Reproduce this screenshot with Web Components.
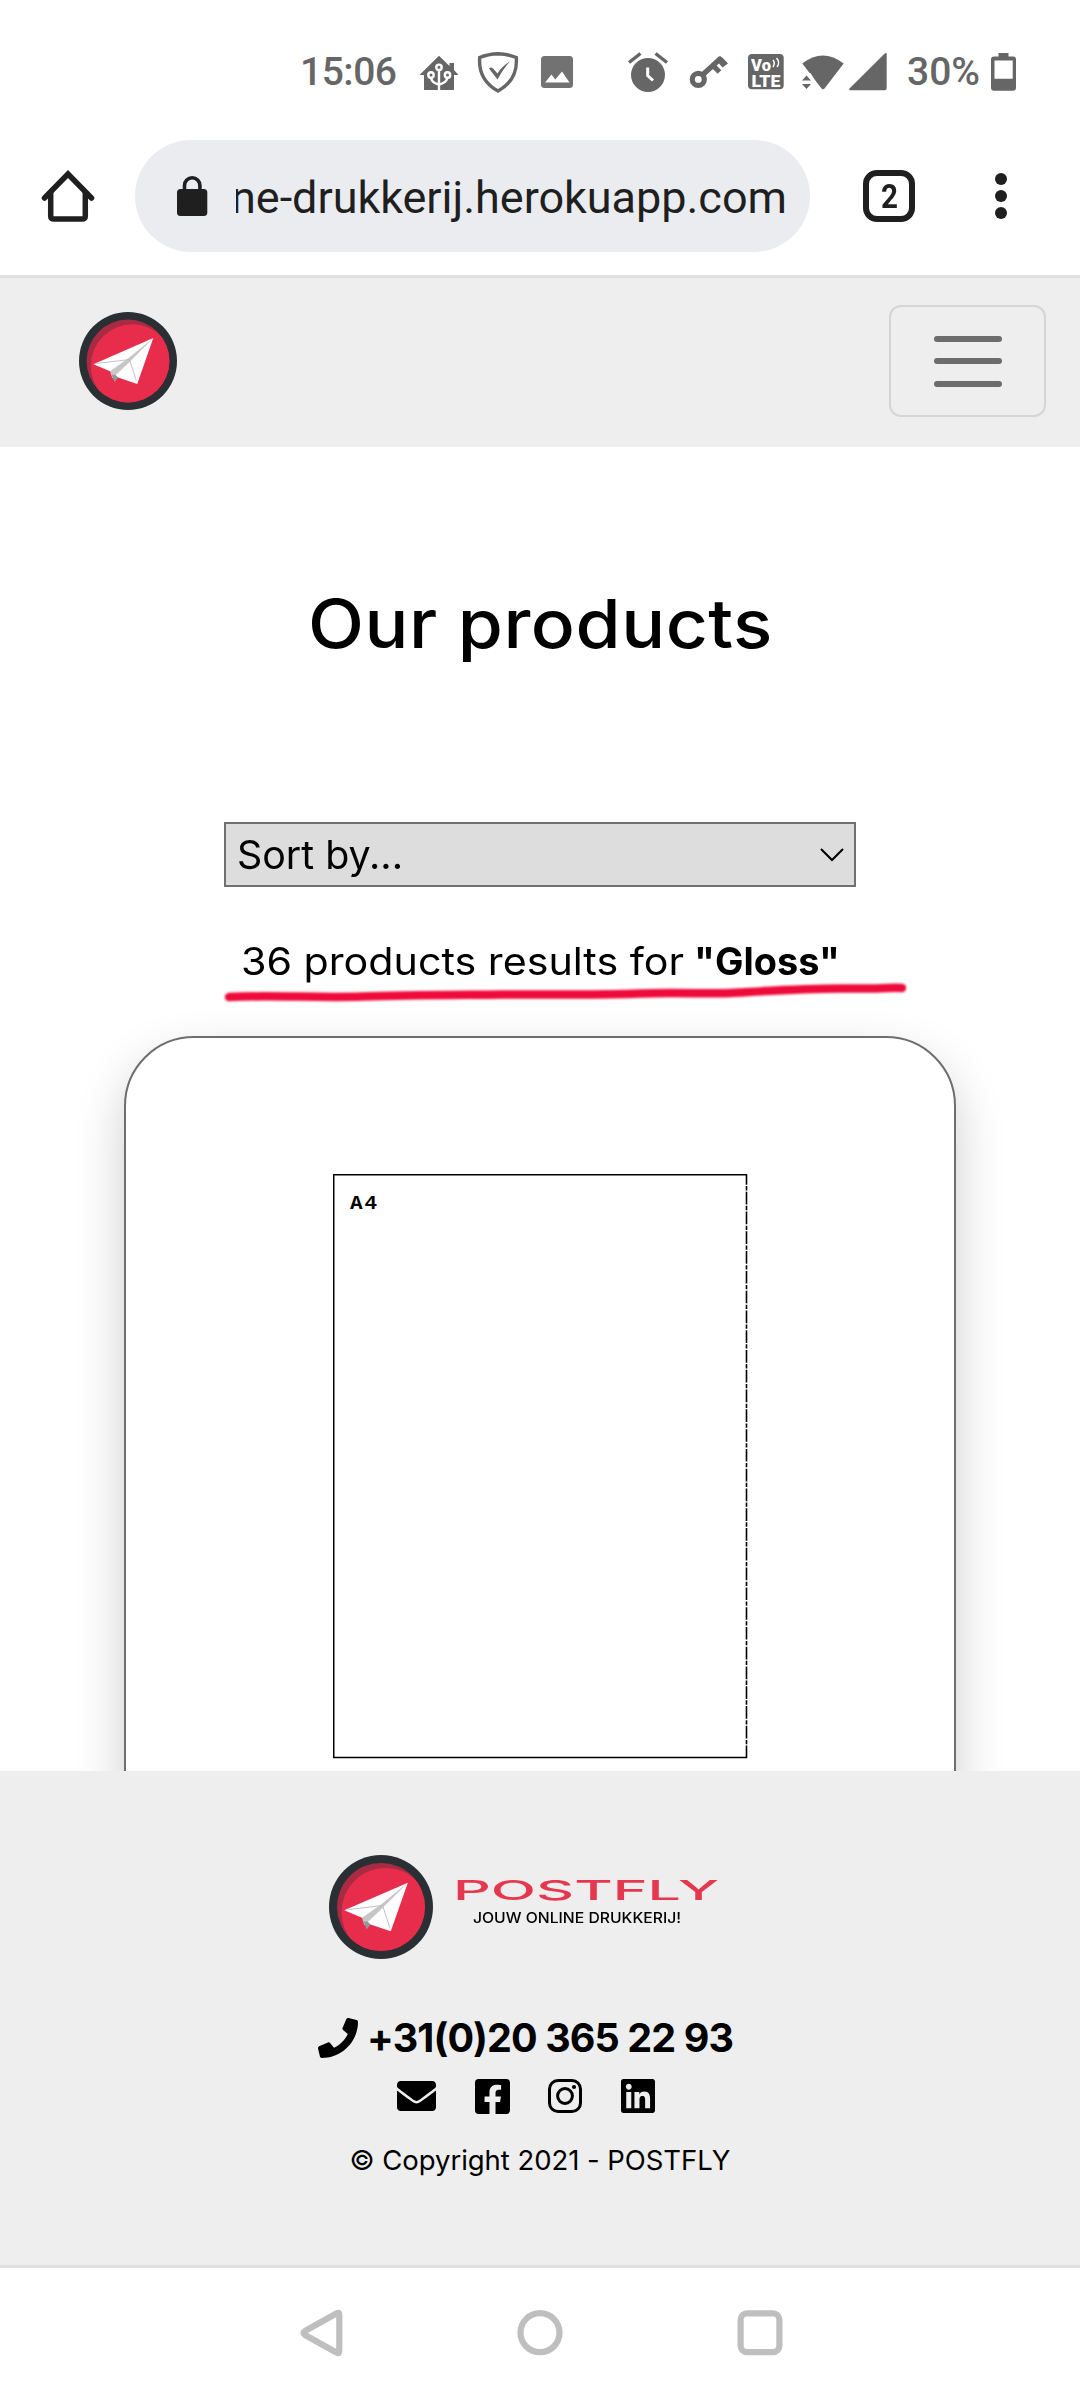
<!DOCTYPE html>
<html lang="en">
<head>
<meta charset="utf-8">
<meta name="viewport" content="width=device-width">
<title>Our products - POSTFLY</title>
<style>
  html, body { margin: 0; background: #fff; }
  body { font-family: Inter, "Open Sans", sans-serif; color: #000; }
</style>
</head>
<body>
<phone-screen>
  <status-bar slot="top"></status-bar>
  <browser-toolbar slot="top"></browser-toolbar>
  <site-header></site-header>
  <product-page heading="Our products">
    <sort-select>Sort by...</sort-select>
    <result-count count="36" term="Gloss"></result-count>
    <product-card><paper-preview label="A4"></paper-preview></product-card>
  </product-page>
  <site-footer></site-footer>
  <nav-buttons slot="bottom"></nav-buttons>
</phone-screen>

<script>
const define = (name, html, setup) => {
  const t = document.createElement('template');
  t.innerHTML = html;
  customElements.define(name, class extends HTMLElement {
    constructor() {
      super();
      this.attachShadow({ mode: 'open' }).append(t.content.cloneNode(true));
    }
    connectedCallback() { if (setup) setup(this, this.shadowRoot); }
  });
};

/* One line of text set to an exact width: by tracking, or by stretching when "stretch" is present. */
define('fit-text', `
<style>
  :host { display: block; white-space: nowrap; flex: none; }
  span { display: inline-block; transform-origin: 0 50%; }
</style><span><slot></slot></span>`, (el, root) => {
  const w = +el.getAttribute('w');
  const span = root.querySelector('span');
  const n = el.textContent.length;
  el.style.width = w + 'px';
  const natural = span.getBoundingClientRect().width;
  if (el.hasAttribute('stretch')) span.style.transform = `scaleX(${w / natural})`;
  else {
    span.style.letterSpacing = (w - natural) / (n - 1) + 'px';
  }
});

define('phone-screen', `
<style>
  :host { display: flex; flex-direction: column; width: 1080px; height: 2400px; overflow: hidden; background: #fff; }
</style>
<slot name="top"></slot><slot></slot><slot name="bottom"></slot>`);

define('status-bar', `
<style>
  :host { display: flex; height: 68px; padding: 50px 0 0 300px; color: #666; font: 500 39px/44px Roboto, sans-serif; }
  svg { flex: none; height: 44px; fill: #666; }
  fit-text { height: 44px; line-height: 44px; }
</style>
<fit-text w="97">15:06</fit-text>
<svg style="margin-left:21px" width="42" viewBox="418 50 42 44">
  <path d="M439 55.700L449.500 66V63h4.500V70L458.500 75H454V90H424V75H419.500Z"/>
  <g fill="none" stroke="#fff" stroke-width="2.400"><path d="M439 71V90M431 78Q432 83 439 84.500Q446 83 447.500 78"/><circle cx="439" cy="67.300" r="2.700"/><circle cx="431" cy="75" r="2.700"/><circle cx="447.500" cy="75" r="2.700"/></g>
</svg>
<svg style="margin-left:16px" width="44" viewBox="476 50 44 44">
  <path d="M498 53.700Q508 54 516.300 57.500Q518 80 498 91Q478 80 479.700 57.500Q488 54 498 53.700Z" fill="none" stroke="#666" stroke-width="3.400"/>
  <path d="M489 68.500Q491 66.500 493 68.500L497.500 73.500Q502 66 510 61.500Q503 69 497.500 79.500Z"/>
</svg>
<svg style="margin-left:19px" width="36" viewBox="539 50 36 44">
  <rect x="541" y="56" width="32" height="32" rx="3.500" fill="#727272"/>
  <path d="M545 82.500L551.500 74.500L555.300 79.500L562 71.500L569.500 82.500Z" fill="#fff"/>
</svg>
<svg style="margin-left:51px" width="44" viewBox="626 50 44 44">
  <circle cx="648" cy="75" r="17"/>
  <path d="M629 62.500L640.500 53.500M667 62.500L655.500 53.500" stroke="#666" stroke-width="3.400"/>
  <path d="M647.700 67.500V75.500L653 80.500" fill="none" stroke="#fff" stroke-width="3"/>
</svg>
<svg style="margin-left:18px" width="42" viewBox="688 50 42 44">
  <circle cx="698.300" cy="79.400" r="6" fill="none" stroke="#666" stroke-width="5.200"/>
  <path d="M703 74.500L721 58M713.500 66L719.500 72M720 59L725 64" fill="none" stroke="#666" stroke-width="5.200"/>
  <path d="M720 55.700L728 63.500L722.500 67.500L718.500 63Z"/>
</svg>
<svg style="margin-left:16px" width="40" viewBox="746 50 40 44">
  <rect x="748" y="54" width="35.700" height="35.300" rx="4"/>
  <g fill="#fff" font-family="Roboto, sans-serif" font-weight="900"><text x="751" y="70.500" font-size="16.500" textLength="20">Vo</text><text x="751.500" y="86.500" font-size="17" textLength="29" lengthAdjust="spacingAndGlyphs">LTE</text></g>
  <path d="M773 60Q775.500 63 773 67M776.500 58Q780.500 62.500 777 67" fill="none" stroke="#fff" stroke-width="1.500"/>
</svg>
<svg style="margin-left:14px" width="46" viewBox="800 50 46 44">
  <path d="M802.300 63.500Q822.800 47.500 843.700 63.500L824.500 88.500Q823 90 821.500 88.500Z"/>
  <path d="M801 74L810.500 73L814 79V90H801Z" fill="#fff"/>
  <path d="M802 80.500L806.500 75.500L811 80.500ZM802 84L806.500 89L811 84Z"/>
</svg>
<svg style="margin-left:1px" width="42" viewBox="847 50 42 44"><path d="M849.500 88.500L885 53.300Q886.700 52.500 886.700 54V88Q886.700 90.300 884.500 90.300H850.500Q848.500 90.200 849.500 88.500Z"/></svg>
<fit-text style="margin-left:18px" w="73">30%</fit-text>
<svg style="margin-left:9px" width="29" viewBox="989 50 29 44">
  <path fill-rule="evenodd" d="M998.500 53H1008.500V56.500H1013Q1016 56.500 1016 59.500V87.500Q1016 90.700 1013 90.700H994Q991 90.700 991 87.500V59.500Q991 56.500 994 56.500H998.500ZM994.500 60.500V78.700H1012.700V60.500Z"/>
</svg>`);

define('browser-toolbar', `
<style>
  :host { display: flex; align-items: center; box-sizing: border-box; height: 160px; padding: 0 0 1px 40px; border-bottom: 3px solid #e0e0e0; color: #1f1f1f; }
  svg { flex: none; display: block; }
  .pill { display: flex; align-items: center; box-sizing: border-box; width: 675px; height: 112px; margin-left: 39px; padding: 0 23px 0 40px; border-radius: 56px; background: #ebecf0; }
  .clip { display: flex; justify-content: flex-end; width: 551px; margin-left: 27px; padding-top: 4px; overflow: hidden; }
  fit-text { font: 400 45px/60px Roboto, sans-serif; }
  .tabs { display: flex; align-items: center; justify-content: center; box-sizing: border-box; width: 52px; height: 52px; margin-left: 53px; border: 6px solid #1f1f1f; border-radius: 14px; }
  .tabs fit-text { font-weight: 700; font-size: 34px; line-height: 40px; }
</style>
<svg width="56" height="56" viewBox="40 168 56 56"><g fill="none" stroke="#1f1f1f" stroke-width="5.500"><path d="M44.500 198L68 174L91.500 198" stroke-linecap="round"/><path d="M50.700 191V216Q50.700 219 54 219H82Q85.300 219 85.300 216V191"/></g></svg>
<div class="pill">
  <svg width="34" height="44" viewBox="175 173 34 44" fill="#1f1f1f"><rect x="177" y="188" width="30.300" height="27" rx="3.500"/><path d="M184.500 190V184.500A7.700 7.700 0 0 1 199.900 184.500V190" fill="none" stroke="#1f1f1f" stroke-width="3.600"/></svg>
  <div class="clip"><fit-text w="556">ne-drukkerij.herokuapp.com</fit-text></div>
</div>
<div class="tabs"><fit-text w="17" stretch>2</fit-text></div>
<svg style="margin-left:78px" width="16" height="52" viewBox="993 170 16 52" fill="#1f1f1f"><circle cx="1001" cy="179" r="6"/><circle cx="1001" cy="196" r="6"/><circle cx="1001" cy="213" r="6"/></svg>`);

define('postfly-badge', `
<style>:host { display: block; flex: none; } svg { display: block; width: 100%; height: 100%; }</style>
<svg viewBox="0 0 100 100">
  <clipPath id="c"><circle cx="50" cy="50" r="42.300"/></clipPath>
  <circle cx="50" cy="50" r="50" fill="#2a2f33"/>
  <g clip-path="url(#c)"><rect width="100" height="100" fill="#a82b43"/><circle cx="54.500" cy="55" r="42.500" fill="#e72d4b"/></g>
  <path d="M75.800 26.600L14.700 53.200L31.700 60.400L39.200 66.500L59.400 73.400Z" fill="#fff"/>
  <path d="M75.800 26.600L50 47.500L31.700 60.400L34 67.500L50.500 52Z" fill="#c6c6c6"/>
  <path d="M33.500 64L36.200 71.700L40 66.800L37 64Z" fill="#929698"/>
  <path d="M18 52.500L51.500 48.500L58.500 70" fill="none" stroke="#bbb" stroke-width=".9"/>
</svg>`);

define('site-header', `
<style>
  :host { display: flex; align-items: center; justify-content: space-between; box-sizing: border-box; height: 169px; padding: 0 34px 3px 79px; background: #eee; }
  postfly-badge { width: 98px; height: 98px; }
  button { display: flex; flex-direction: column; align-items: center; justify-content: center; gap: 16.500px; box-sizing: border-box; width: 157px; height: 112px; padding: 0; border: 2px solid #d5d5d5; border-radius: 12px; background: none; }
  i { width: 68px; height: 6px; border-radius: 3px; background: #6c6c6c; }
</style>
<postfly-badge></postfly-badge>
<button aria-label="Menu"><i></i><i></i><i></i></button>`);

define('product-page', `
<style>
  :host { display: flex; flex-direction: column; align-items: center; height: 1324px; flex: none; overflow: hidden; }
  h1 { margin: 134px 0 156px; font: 500 67.500px/85px Inter, sans-serif; letter-spacing: .5px; }
</style>
<h1></h1><slot></slot>`, (el, root) => {
  root.querySelector('h1').innerHTML = `<fit-text w="465" stretch>${el.getAttribute('heading')}</fit-text>`;
});

define('sort-select', `
<style>
  :host { display: flex; align-items: center; justify-content: space-between; box-sizing: border-box; width: 632px; height: 65px; padding: 0 9px 0 11px; border: 2px solid #707070; background: #ddd; font-size: 39px; line-height: 61px; }
</style>
<fit-text w="168"></fit-text>
<svg width="26" height="16" viewBox="0 0 26 16"><path d="M2 2L13 13L24 2" fill="none" stroke="#000" stroke-width="2"/></svg>`, (el, root) => {
  const t = document.createElement('fit-text');
  t.setAttribute('w', '166');
  t.setAttribute('stretch', '');
  t.textContent = el.textContent.trim();
  root.querySelector('fit-text').replaceWith(t);
});

define('result-count', `
<style>
  :host { position: relative; display: flex; justify-content: space-between; box-sizing: border-box; width: 600px; height: 60px; margin: 44px 0 45px; font-size: 38.500px; line-height: 60px; }
  b { font-weight: 700; }
  svg { position: absolute; left: -20px; top: 45px; }
</style>
<svg width="700" height="30" viewBox="220 976 700 30"><path d="M229 997C270 995 320 998 363 996.500S450 995 503 994.500S590 995.500 640 993.500S700 995 740 992.500S810 988 850 988.500S890 987 902 988" fill="none" stroke="#ee0a3a" stroke-width="8.500" stroke-linecap="round" style="filter:blur(1px)"/></svg>`, (el, root) => {
  root.querySelector('svg').insertAdjacentHTML('beforebegin',
    `<fit-text style="margin-left:1px" w="443" stretch>${el.getAttribute('count')} products results for</fit-text><b><fit-text w="146" stretch>"${el.getAttribute('term')}"</fit-text></b>`);
});

define('product-card', `
<style>
  :host { display: flex; justify-content: center; flex: none; box-sizing: border-box; width: 832px; height: 1100px; padding-top: 136px; border: 2px solid #6e6e6e; border-radius: 70px; background: #fff; box-shadow: 0 22px 50px rgba(0,0,0,.2); }
</style><slot></slot>`);

define('paper-preview', `
<style>
  :host { display: block; width: 415px; height: 585px; }
  svg { display: block; }
</style>
<svg width="415" height="585" viewBox="0 0 415 585">
  <g fill="none" stroke="#000"><path d="M414 .75H.75V583.500H414" stroke-width="1.500"/><path d="M413.500 0V584" stroke-width="1.600" stroke-dasharray="12.680 1.400 4.300 1.400" stroke-dashoffset="2"/></g>
  <text x="17" y="35" font-family="Liberation Mono, monospace" font-weight="700" font-size="21" textLength="27"></text>
</svg>`, (el, root) => {
  root.querySelector('text').textContent = el.getAttribute('label');
});

define('site-footer', `
<style>
  :host { display: flex; flex-direction: column; align-items: center; box-sizing: border-box; height: 494px; flex: none; padding-top: 84px; background: #eee; }
  .brand { display: flex; width: 390px; margin-right: 33px; }
  postfly-badge { width: 104px; height: 104px; }
  .words { display: flex; flex-direction: column; margin: 22px 0 0 20px; }
  .name { color: #e5384f; font: 500 27.500px/26px Inter, sans-serif; }
  .tag { margin: 4px 0 0 20px; font: 500 14.500px/22px Inter, sans-serif; }
  .phone { display: flex; align-items: center; gap: 9px; height: 50px; width: 418px; margin: 54px 0 0 -26px; font-size: 39.500px; line-height: 50px; font-weight: 700; }
  .social { display: flex; align-items: center; width: 258px; height: 36px; margin: 15px 0 0 -28px; }
  .social svg + svg { margin-left: 38.500px; }
  svg { display: block; flex: none; }
  .copy { margin-top: 25px; font-size: 27.500px; line-height: 42px; }
</style>
<div class="brand"><postfly-badge></postfly-badge>
  <div class="words"><fit-text class="name" w="266" stretch>POSTFLY</fit-text><fit-text class="tag" w="208" stretch>JOUW ONLINE DRUKKERIJ!</fit-text></div>
</div>
<div class="phone">
  <svg width="40" height="40" viewBox="0 0 512 512"><path d="M493.400 24.600l-104-24c-11.300-2.600-22.900 3.300-27.500 13.900l-48 112c-4.200 9.800-1.400 21.300 6.900 28l60.600 49.600c-36 76.700-98.900 140.500-177.200 177.200l-49.600-60.600c-6.800-8.300-18.200-11.100-28-6.900l-112 48C3.900 366.500-2 378.100.6 389.400l24 104C27.100 504.200 36.700 512 48 512c256.100 0 464-207.500 464-464 0-11.200-7.700-20.900-18.600-23.400z"/></svg>
  <fit-text w="367">+31(0)20 365 22 93</fit-text>
</div>
<div class="social">
  <svg width="39" height="30" viewBox="0 64 512 384" preserveAspectRatio="none"><path d="M502.300 190.800c3.900-3.100 9.700-.2 9.700 4.700V400c0 26.500-21.500 48-48 48H48c-26.500 0-48-21.500-48-48V195.600c0-5 5.700-7.800 9.700-4.700 22.400 17.400 52.100 39.500 154.100 113.600 21.100 15.400 56.700 47.800 92.200 47.600 35.700.3 72-32.800 92.300-47.600 102-74.100 131.600-96.300 154-113.700zM256 320c23.200.4 56.600-29.200 73.400-41.400 132.700-96.300 142.800-104.700 173.400-128.700 5.800-4.500 9.200-11.500 9.200-18.900v-19c0-26.500-21.500-48-48-48H48c-26.500 0-48 21.500-48 48v19c0 7.400 3.400 14.300 9.200 18.900 30.600 23.900 40.700 32.400 173.400 128.700 16.800 12.200 50.200 41.800 73.400 41.400z"/></svg>
  <svg width="35" height="35" viewBox="0 32 448 448"><path d="M400 32H48A48 48 0 0 0 0 80v352a48 48 0 0 0 48 48h137.250V327.690h-63V256h63v-54.640c0-62.150 37-96.480 93.670-96.480 27.140 0 55.520 4.840 55.520 4.840v61h-31.270c-30.810 0-40.420 19.120-40.420 38.730V256h68.780l-11 71.690h-57.780V480H400a48 48 0 0 0 48-48V80a48 48 0 0 0-48-48z"/></svg>
  <svg width="34" height="34" viewBox="0 0 34 34"><g fill="none" stroke="#000" stroke-width="3"><rect x="1.500" y="1.500" width="31" height="31" rx="8.500"/><circle cx="17" cy="17" r="7.400"/></g><circle cx="26" cy="8" r="2.100"/></svg>
  <svg width="34" height="34" viewBox="0 32 448 448"><path d="M416 32H31.900C14.300 32 0 46.500 0 64.300v383.400C0 465.500 14.300 480 31.900 480H416c17.600 0 32-14.500 32-32.300V64.300c0-17.800-14.400-32.300-32-32.300zM135.400 416H69V202.200h66.500V416zm-33.200-243c-21.300 0-38.500-17.300-38.500-38.500S80.900 96 102.200 96c21.200 0 38.500 17.300 38.500 38.500 0 21.300-17.200 38.500-38.500 38.500zm282.100 243h-66.400V312c0-24.800-.5-56.700-34.500-56.700-34.600 0-39.900 27-39.900 54.900V416h-66.400V202.200h63.700v29.200h.9c8.900-16.800 30.600-34.500 62.200-34.500 66.500 0 78.900 43.800 78.900 100.900V416z"/></svg>
</div>
<fit-text class="copy" w="381">© Copyright 2021 - POSTFLY</fit-text>`);

define('nav-buttons', `
<style>
  :host { display: flex; justify-content: flex-start; gap: 170px; box-sizing: border-box; height: 135px; padding: 40px 0 0 298px; border-top: 3px solid #e0e0e0; background: #fff; }
  svg { flex: none; fill: none; stroke: #bfbfbf; stroke-width: 6.200; }
</style>
<svg width="48" height="50" viewBox="298 2308 48 50"><path d="M339.300 2315V2351Q339.300 2354.500 336.300 2352.500L305 2335Q302 2333 305 2331L336.300 2313.500Q339.300 2311.500 339.300 2315Z"/></svg>
<svg width="48" height="50" viewBox="516 2308 48 50"><circle cx="540" cy="2332.700" r="19.500"/></svg>
<svg width="48" height="50" viewBox="734 2308 48 50" style="margin-left:2px"><rect x="738.600" y="2313.300" width="38.800" height="38.800" rx="6.500"/></svg>`);
</script>
</body>
</html>
